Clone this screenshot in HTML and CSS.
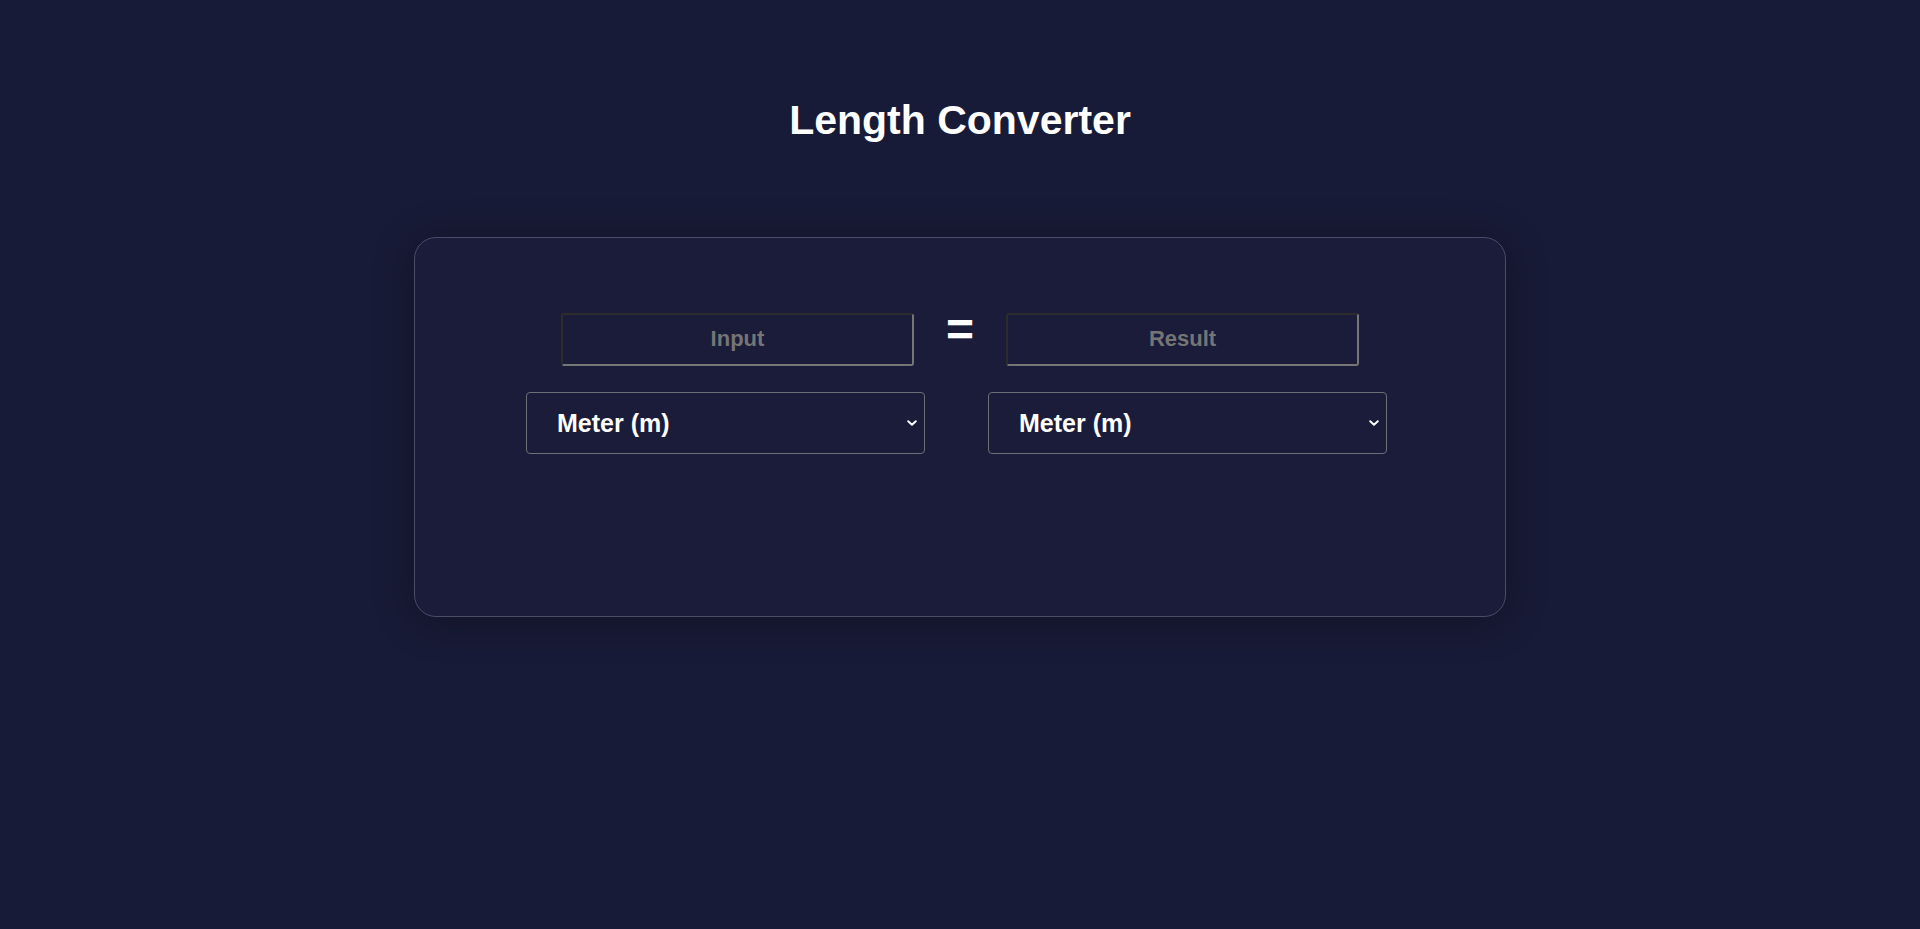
FILE: index.html
```html
<!DOCTYPE html>
<html lang="en">
<head>
<meta charset="utf-8">
<title>Length Converter</title>
<link rel="stylesheet" href="styles.css">
</head>
<body>
  <main class="page">
    <h1 class="title">Length Converter</h1>
    <section class="card">
      <div class="value-row">
        <input class="value" type="text" placeholder="Input">
        <span class="equals">=</span>
        <input class="value" type="text" placeholder="Result" readonly>
      </div>
      <div class="unit-row">
        <div class="unit-wrap">
          <select class="unit">
            <option>Meter (m)</option>
            <option>Kilometer (km)</option>
            <option>Centimeter (cm)</option>
          </select>
          <svg class="chevron" width="10" height="6" viewBox="0 0 10 6" aria-hidden="true"><path d="M1.2 1.2 L5 4.8 L8.8 1.2" fill="none" stroke="#ffffff" stroke-width="1.9" stroke-linecap="round" stroke-linejoin="round"/></svg>
        </div>
        <div class="unit-wrap">
          <select class="unit">
            <option>Meter (m)</option>
            <option>Kilometer (km)</option>
            <option>Centimeter (cm)</option>
          </select>
          <svg class="chevron" width="10" height="6" viewBox="0 0 10 6" aria-hidden="true"><path d="M1.2 1.2 L5 4.8 L8.8 1.2" fill="none" stroke="#ffffff" stroke-width="1.9" stroke-linecap="round" stroke-linejoin="round"/></svg>
        </div>
      </div>
    </section>
  </main>
</body>
</html>
```

FILE: styles.css
```css
html, body {
  margin: 0;
  padding: 0;
  background: #181b37;
  height: 100%;
}

body {
  font-family: "Liberation Sans", Arial, sans-serif;
  color: #ffffff;
}

.page {
  display: flex;
  flex-direction: column;
  align-items: center;
  padding-top: 97px;
}

.title {
  margin: 0;
  font-size: 41px;
  font-weight: 700;
  line-height: 46px;
  color: #ffffff;
}

.card {
  box-sizing: border-box;
  width: 1092px;
  height: 380px;
  margin-top: 94px;
  background: #1a1c3a;
  border: 1px solid #4a4c68;
  border-radius: 22px;
  box-shadow: 0 4px 40px rgba(0, 0, 0, 0.32);
  padding-top: 68px;
  display: flex;
  flex-direction: column;
  align-items: center;
}

.value-row {
  display: flex;
  align-items: baseline;
  justify-content: center;
  gap: 32px;
}

.value {
  box-sizing: border-box;
  width: 353px;
  height: 53px;
  margin: 0;
  padding: 0 10px;
  background: transparent;
  border-style: solid;
  border-width: 2px;
  border-color: #2c2c2a #767676 #767676 #2c2c2a;
  border-radius: 3px;
  font-family: "Liberation Sans", Arial, sans-serif;
  font-size: 22px;
  font-weight: 700;
  color: #ffffff;
  text-align: center;
  outline: none;
}

.value::placeholder {
  color: #757575;
  opacity: 1;
}

.equals {
  font-size: 48px;
  font-weight: 700;
  line-height: 1;
  color: #ffffff;
}

.unit-row {
  display: flex;
  justify-content: center;
  gap: 63px;
  margin-top: 26px;
  padding-right: 7px;
}

.unit-wrap {
  position: relative;
  width: 399px;
  height: 62px;
}

.unit {
  box-sizing: border-box;
  width: 100%;
  height: 100%;
  margin: 0;
  padding: 0 30px 0 30px;
  -webkit-appearance: none;
  appearance: none;
  background-color: transparent;
  border: 1px solid #6e6e78;
  border-radius: 4px;
  font-family: "Liberation Sans", Arial, sans-serif;
  font-size: 25px;
  font-weight: 700;
  color: #ffffff;
  outline: none;
}

.unit option {
  background: #1a1c3a;
  color: #ffffff;
}

.chevron {
  position: absolute;
  right: 8px;
  top: 28px;
  pointer-events: none;
}
```
